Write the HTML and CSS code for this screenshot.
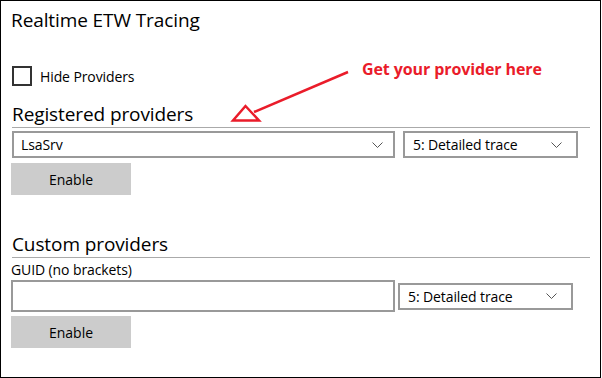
FILE: index.html
```html
<!DOCTYPE html>
<html>
<head>
<meta charset="utf-8">
<link rel="stylesheet" href="styles.css">
</head>
<body>
<div class="frame">
  <div class="title">Realtime ETW Tracing</div>
  <label class="check-row"><span class="box"></span><span class="check-label">Hide Providers</span></label>
  <div class="section-head first">Registered providers</div>
  <div class="row">
    <div class="combo wide"><span>LsaSrv</span><svg class="chev" width="11" height="6" viewBox="0 0 11 6"><path d="M0.5 0.5 L5.5 5.5 L10.5 0.5" fill="none" stroke="#555" stroke-width="1"/></svg></div>
    <div class="combo level"><span>5: Detailed trace</span><svg class="chev" width="11" height="6" viewBox="0 0 11 6"><path d="M0.5 0.5 L5.5 5.5 L10.5 0.5" fill="none" stroke="#555" stroke-width="1"/></svg></div>
  </div>
  <div class="btn">Enable</div>
  <div class="section-head second">Custom providers</div>
  <div class="label">GUID (no brackets)</div>
  <div class="row row2">
    <div class="textbox"></div>
    <div class="combo level2"><span>5: Detailed trace</span><svg class="chev" width="11" height="6" viewBox="0 0 11 6"><path d="M0.5 0.5 L5.5 5.5 L10.5 0.5" fill="none" stroke="#555" stroke-width="1"/></svg></div>
  </div>
  <div class="btn btn2">Enable</div>

  <div class="note">Get your provider here</div>
  <svg class="arrow" width="602" height="378" viewBox="0 0 602 378">
    <line x1="348" y1="72" x2="254" y2="112" stroke="#ea1c2a" stroke-width="2.5"/>
    <polygon points="245.5,106 233,120.5 259,120.5" fill="none" stroke="#ea1c2a" stroke-width="2.5"/>
  </svg>
</div>
</body>
</html>
```
FILE: styles.css
```css
html, body { margin: 0; padding: 0; background: #fff; }
.frame {
  position: relative;
  width: 601px;
  height: 378px;
  box-sizing: border-box;
  border: 1px solid #000;
  padding: 0 10px;
  font-family: "Open Sans", "Noto Sans", sans-serif;
  color: #000;
  overflow: hidden;
}
.title {
  margin-top: 5px;
  height: 28px;
  line-height: 28px;
  font-size: 19px;
  letter-spacing: -0.1px;
}
.check-row {
  display: flex;
  align-items: center;
  margin-top: 32px;
  height: 20px;
}
.box {
  width: 20px;
  height: 20px;
  box-sizing: border-box;
  border: 2px solid #333;
  margin-left: 1px;
}
.check-label {
  margin-left: 8px;
  font-size: 14px;
  letter-spacing: -0.1px;
}
.section-head {
  font-size: 19px;
  line-height: 26px;
  height: 26px;
  border-bottom: 1px solid #aaa;
  margin-left: 1px;
  margin-right: 0;
  letter-spacing: -0.1px;
}
.section-head.first { margin-top: 15px; }
.section-head.second { margin-top: 36px; }
.row {
  display: flex;
  margin-top: 3px;
  height: 27px;
}
.combo {
  box-sizing: border-box;
  border: 2px solid #999;
  height: 27px;
  display: flex;
  align-items: center;
  justify-content: space-between;
  font-size: 14px;
  letter-spacing: -0.1px;
  padding: 0 10px 0 7px;
}
.combo.wide { width: 383px; margin-left: 1px; }
.combo.level { width: 175px; margin-left: 8px; padding-left: 8px; padding-right: 14px; }
.chev { display: block; }
.btn {
  margin-top: 5px;
  width: 120px;
  height: 32px;
  background: #ccc;
  display: flex;
  align-items: center;
  justify-content: center;
  font-size: 14px;
}
.label {
  margin-top: 2px;
  font-size: 14px;
  letter-spacing: -0.1px;
  line-height: 19px;
  height: 19px;
}
.row2 { margin-top: 1px; height: 32px; align-items: center; }
.textbox {
  box-sizing: border-box;
  width: 384px;
  height: 32px;
  border: 2px solid #999;
}
.combo.level2 { width: 175px; margin-left: 3px; padding-left: 8px; padding-right: 14px; }
.btn2 { margin-top: 4px; }
.note {
  position: absolute;
  left: 361px;
  top: 57px;
  font-family: "Open Sans", sans-serif;
  font-weight: 700;
  font-size: 16px;
  color: #ea1c2a;
  letter-spacing: -0.1px;
}
.arrow {
  position: absolute;
  left: -1px;
  top: -1px;
  pointer-events: none;
}
```
